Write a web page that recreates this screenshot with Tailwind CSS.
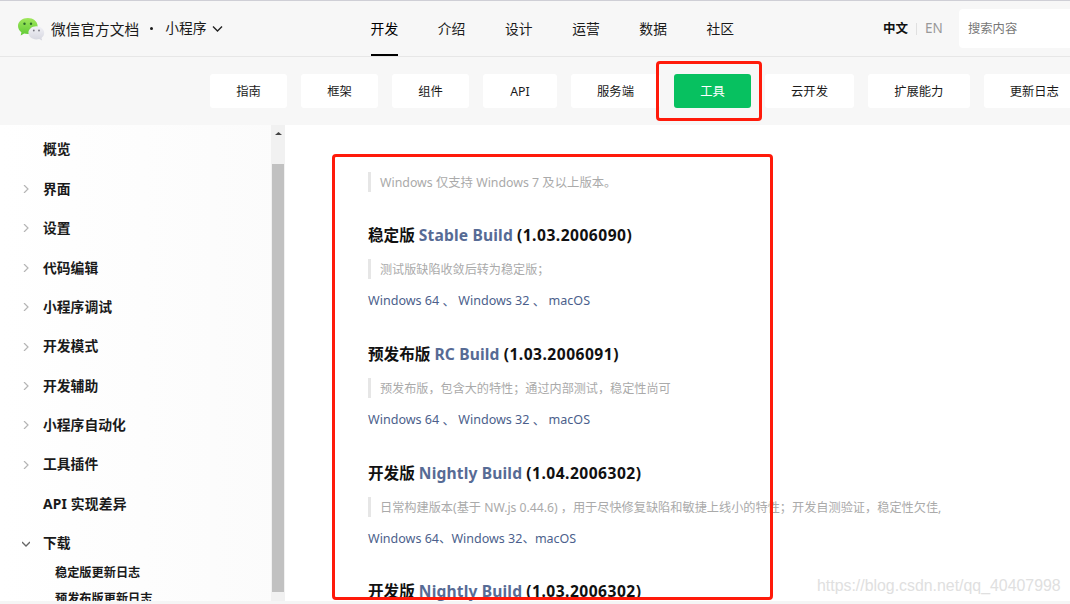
<!DOCTYPE html>
<html lang="zh-CN">
<head>
    <meta charset="UTF-8">
    <meta name="viewport" content="width=device-width, initial-scale=1.0">
    <title>微信官方文档 · 小程序</title>

    <!-- Tailwind CSS -->
    <script src="https://cdn.jsdelivr.net/npm/@tailwindcss/browser@4"></script>
</head>
<body class="relative h-[604px] w-[1070px] overflow-hidden bg-white font-['Noto_Sans','Noto_Sans_CJK_SC',sans-serif] text-[#1a1a1a]">

    <!-- Header -->
    <header class="flex h-[57px] items-center border-t border-b border-t-[#cfcfd6] border-b-[#e7e7e7] bg-[#f7f7f7] whitespace-nowrap">
        <div class="flex w-[370.600px] items-center pl-[17px]">
            <svg class="h-6 w-7" viewBox="0 0 28 24">
                <defs>
                    <linearGradient id="green" x1="0" y1="0" x2="0" y2="1">
                        <stop offset="0" stop-color="#a0e75c"/>
                        <stop offset="1" stop-color="#5fca35"/>
                    </linearGradient>
                    <linearGradient id="grey" x1="0" y1="0" x2="0" y2="1">
                        <stop offset="0" stop-color="#f2f2f7"/>
                        <stop offset="1" stop-color="#d5d6df"/>
                    </linearGradient>
                </defs>
                <path fill="url(#green)" d="M10.800 1C5.500 1 1 4.500 1 9c0 2.600 1.300 4.700 3.400 6.200L3.700 18.500l3.500-1.900c1.100.3 2.300.5 3.600.5 5.400 0 9.800-3.600 9.800-8.100s-4.400-8-9.800-8z"/>
                <path fill="url(#grey)" d="M19.300 9.200c-4.400 0-7.900 2.900-7.900 6.600s3.500 6.600 7.900 6.600c1 0 2-.2 2.900-.4l2.900 1.500-.6-2.600c1.700-1.200 2.700-3 2.700-5.100 0-3.700-3.500-6.600-7.900-6.600z"/>
                <circle cx="7.500" cy="6.800" r="1.200" fill="#2c6b2c"/>
                <circle cx="14" cy="6.800" r="1.200" fill="#2c6b2c"/>
                <circle cx="16.800" cy="13.500" r=".9" fill="#75757f"/>
                <circle cx="22" cy="13.500" r=".9" fill="#75757f"/>
            </svg>
            <span class="ml-1.5 pt-px text-[14.700px]">微信官方文档</span>
            <span class="ml-[11px] size-[3px] rounded-full bg-[#1a1a1a]"></span>
            <span class="ml-3 text-[13.800px]">小程序</span>
            <svg class="ml-[5px] h-2 w-[11px]" viewBox="0 0 11 8" fill="none" stroke="#222" stroke-width="1.400"><path d="M1 1.500l4.500 4.500L10 1.500"/></svg>
        </div>
        <nav class="flex h-[56px] gap-[39.600px] text-[13.800px] leading-[55px]">
            <a class="h-[55px] border-b-2 border-black text-black">开发</a>
            <a>介绍</a>
            <a>设计</a>
            <a>运营</a>
            <a>数据</a>
            <a>社区</a>
        </nav>
        <div class="ml-auto flex items-center text-[12.500px]">
            <b class="pt-px text-[#111]">中文</b>
            <i class="ml-2 h-3 w-px bg-[#e0e0e0]"></i>
            <span class="ml-2 w-[18px] text-[13.500px] text-[#999]">EN</span>
            <div class="ml-4 flex h-[39px] w-[111px] items-center rounded-l-sm bg-white pt-0.5 pl-[9px] text-[12.300px] text-[#777]">搜索内容</div>
        </div>
    </header>

    <!-- Category tabs -->
    <div class="flex h-[68px] gap-3.5 bg-[#f7f7f7] pt-[17px] pl-[210px] text-[12.300px] leading-[35px] whitespace-nowrap *:h-[34px] *:shrink-0 *:rounded-[3px] *:text-center">
        <a class="w-[77px] bg-white">指南</a>
        <a class="w-[77px] bg-white">框架</a>
        <a class="w-[77px] bg-white">组件</a>
        <a class="w-[74px] bg-white">API</a>
        <a class="w-[89px] bg-white">服务端</a>
        <a class="w-[77px] bg-[#07c160] text-white">工具</a>
        <a class="w-[89px] bg-white">云开发</a>
        <a class="w-[101.500px] bg-white">扩展能力</a>
        <a class="w-[101.500px] bg-white">更新日志</a>
    </div>

    <div class="flex h-[476px] overflow-hidden">
        <!-- Sidebar -->
        <aside class="flex w-[285px] shrink-0 bg-linear-to-r from-white to-[#fbfbfb]">
            <ul class="w-[271px] pt-[5px] text-[13.800px] font-bold whitespace-nowrap">
                <li class="flex h-[39.400px] items-center pl-[43px]">概览</li>
                <li class="flex h-[39.400px] items-center gap-[13px] pl-[22px]"><svg class="size-2" viewBox="0 0 8 8" fill="none" stroke="#b5b5b5" stroke-width="1.200"><path d="M2 0l4 4-4 4"/></svg>界面</li>
                <li class="flex h-[39.400px] items-center gap-[13px] pl-[22px]"><svg class="size-2" viewBox="0 0 8 8" fill="none" stroke="#b5b5b5" stroke-width="1.200"><path d="M2 0l4 4-4 4"/></svg>设置</li>
                <li class="flex h-[39.400px] items-center gap-[13px] pl-[22px]"><svg class="size-2" viewBox="0 0 8 8" fill="none" stroke="#b5b5b5" stroke-width="1.200"><path d="M2 0l4 4-4 4"/></svg>代码编辑</li>
                <li class="flex h-[39.400px] items-center gap-[13px] pl-[22px]"><svg class="size-2" viewBox="0 0 8 8" fill="none" stroke="#b5b5b5" stroke-width="1.200"><path d="M2 0l4 4-4 4"/></svg>小程序调试</li>
                <li class="flex h-[39.400px] items-center gap-[13px] pl-[22px]"><svg class="size-2" viewBox="0 0 8 8" fill="none" stroke="#b5b5b5" stroke-width="1.200"><path d="M2 0l4 4-4 4"/></svg>开发模式</li>
                <li class="flex h-[39.400px] items-center gap-[13px] pl-[22px]"><svg class="size-2" viewBox="0 0 8 8" fill="none" stroke="#b5b5b5" stroke-width="1.200"><path d="M2 0l4 4-4 4"/></svg>开发辅助</li>
                <li class="flex h-[39.400px] items-center gap-[13px] pl-[22px]"><svg class="size-2" viewBox="0 0 8 8" fill="none" stroke="#b5b5b5" stroke-width="1.200"><path d="M2 0l4 4-4 4"/></svg>小程序自动化</li>
                <li class="flex h-[39.400px] items-center gap-[13px] pl-[22px]"><svg class="size-2" viewBox="0 0 8 8" fill="none" stroke="#b5b5b5" stroke-width="1.200"><path d="M2 0l4 4-4 4"/></svg>工具插件</li>
                <li class="flex h-[39.400px] items-center pl-[43px] tracking-[0.200px]">API 实现差异</li>
                <li class="flex h-[39.400px] items-center gap-[13px] pl-[22px]"><svg class="size-2" viewBox="0 0 8 8" fill="none" stroke="#666" stroke-width="1.300"><path d="M0 2l4 4 4-4"/></svg>下载</li>
                <li class="mt-[-3px] flex h-[26px] items-center pl-[55px] text-[12.200px]">稳定版更新日志</li>
                <li class="flex h-[26px] items-center pl-[55px] text-[12.200px]">预发布版更新日志</li>
            </ul>
            <!-- Scrollbar -->
            <div class="flex w-3.5 flex-col items-center bg-[#f1f1f1]">
                <svg class="mt-[7px] mb-[29px] h-[3px] w-[7px]" viewBox="0 0 7 3"><path fill="#444" d="M0 3L3.500 0 7 3z"/></svg>
                <div class="h-[428px] w-3 bg-[#c1c1c1]"></div>
            </div>
        </aside>

        <!-- Content -->
        <main class="pt-[47px] pl-[83px] whitespace-nowrap">
            <blockquote class="mb-[31px] h-5 border-l-3 border-[#e6e6e6] pl-[9px] text-[12.350px] leading-[22px] text-[#aaa]">Windows 仅支持 Windows 7 及以上版本。</blockquote>

            <section class="h-[118.800px]">
                <h3 class="h-6 text-[15.600px] leading-6 font-bold text-[#111]">稳定版 <a class="tracking-[0.150px] text-[#576b95]">Stable Build</a> <span class="tracking-[0.480px]">(1.03.2006090)</span></h3>
                <blockquote class="mt-3 h-5 border-l-3 border-[#e6e6e6] pl-[9px] text-[12.100px] leading-[22px] text-[#aaa]">测试版缺陷收敛后转为稳定版；</blockquote>
                <p class="mt-3 h-5 text-[12.550px] leading-5 text-[#4c5f8c]">Windows 64 、 Windows 32 、 macOS</p>
            </section>

            <section class="h-[118.800px]">
                <h3 class="h-6 text-[15.600px] leading-6 font-bold text-[#111]">预发布版 <a class="tracking-[0.150px] text-[#576b95]">RC Build</a> <span class="tracking-[0.480px]">(1.03.2006091)</span></h3>
                <blockquote class="mt-3 h-5 border-l-3 border-[#e6e6e6] pl-[9px] text-[12.120px] leading-[22px] text-[#aaa]">预发布版，包含大的特性；通过内部测试，稳定性尚可</blockquote>
                <p class="mt-3 h-5 text-[12.550px] leading-5 text-[#4c5f8c]">Windows 64 、 Windows 32 、 macOS</p>
            </section>

            <section class="h-[118.800px]">
                <h3 class="h-6 text-[15.600px] leading-6 font-bold text-[#111]">开发版 <a class="tracking-[0.150px] text-[#576b95]">Nightly Build</a> <span class="tracking-[0.480px]">(1.04.2006302)</span></h3>
                <blockquote class="mt-3 h-5 border-l-3 border-[#e6e6e6] pl-[9px] text-[12.180px] leading-[22px] text-[#aaa]">日常构建版本(基于 NW.js 0.44.6) ，用于尽快修复缺陷和敏捷上线小的特性；开发自测验证，稳定性欠佳,</blockquote>
                <p class="mt-3 h-5 text-[12.500px] leading-5 text-[#4c5f8c]">Windows 64、Windows 32、macOS</p>
            </section>

            <h3 class="h-6 text-[15.600px] leading-6 font-bold text-[#111]">开发版 <a class="tracking-[0.150px] text-[#576b95]">Nightly Build</a> <span class="tracking-[0.480px]">(1.03.2006302)</span></h3>
        </main>
    </div>
    <div class="h-[3px] bg-[#f5f5f5]"></div>

    <!-- Highlight frames -->
    <div class="absolute top-[61px] left-[656px] h-[60px] w-[106px] rounded-[4px] border-3 border-[#ff1a0a]"></div>
    <div class="absolute top-[154px] left-[332px] h-[446px] w-[441px] rounded-[4px] border-3 border-[#ff1a0a]"></div>

    <!-- Watermark -->
    <span class="absolute top-[576px] left-[817px] font-['Liberation_Sans',sans-serif] text-[15.880px] leading-5 text-[#e0e0e0]">https://blog.csdn.net/qq_40407998</span>
</body>
</html>
